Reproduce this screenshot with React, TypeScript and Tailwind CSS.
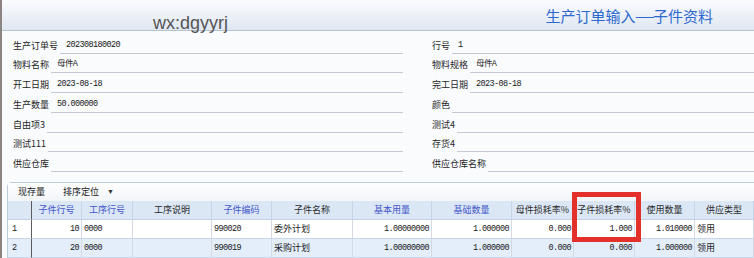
const cjk = "font-['Noto_Sans_CJK_SC','Noto_Sans',sans-serif]";
const mono = "font-['Liberation_Mono','Noto_Sans_CJK_SC',monospace]";

type Field = { label: string; value?: string };

const leftFields: Field[] = [
  { label: "生产订单号", value: "202308180020" },
  { label: "物料名称", value: "母件A" },
  { label: "开工日期", value: "2023-08-18" },
  { label: "生产数量", value: "50.000000" },
  { label: "自由项3" },
  { label: "测试111" },
  { label: "供应仓库" },
];

const rightFields: Field[] = [
  { label: "行号", value: "1" },
  { label: "物料规格", value: "母件A" },
  { label: "完工日期", value: "2023-08-18" },
  { label: "颜色" },
  { label: "测试4" },
  { label: "存货4" },
  { label: "供应仓库名称" },
];

type Col = { title: string; blue?: boolean; align: "left" | "right" };

const cols: Col[] = [
  { title: "", align: "left" },
  { title: "子件行号", blue: true, align: "right" },
  { title: "工序行号", blue: true, align: "left" },
  { title: "工序说明", align: "left" },
  { title: "子件编码", blue: true, align: "left" },
  { title: "子件名称", align: "left" },
  { title: "基本用量", blue: true, align: "right" },
  { title: "基础数量", blue: true, align: "right" },
  { title: "母件损耗率%", align: "right" },
  { title: "子件损耗率%", align: "right" },
  { title: "使用数量", align: "right" },
  { title: "供应类型", align: "left" },
];

const rows = [
  ["1", "10", "0000", "", "990020", "委外计划", "1.00000000", "1.000000", "0.000", "1.000", "1.010000", "领用"],
  ["2", "20", "0000", "", "990019", "采购计划", "1.00000000", "1.000000", "0.000", "0.000", "1.000000", "领用"],
];

function FormRow({ label, value }: Field) {
  return (
    <div className="h-[19.75px] flex items-end">
      <span className={`${cjk} text-[9px] leading-[12px] pb-[2px] pr-[2px] text-[#1e1e1e] whitespace-nowrap`}>
        {label}
      </span>
      <div className="flex-1 h-full border-b border-[#c3cad3] flex items-end pb-[3px] pl-[6px]">
        {value && (
          <span className={`${mono} text-[8.5px] leading-[10px] tracking-[-0.6px] text-[#1a1a1a] whitespace-nowrap`}>
            {value}
          </span>
        )}
      </div>
    </div>
  );
}

function App() {
  return (
    <div className="relative w-[754px] h-[258px] overflow-hidden bg-[#f9fbfd] flex">
      <div className="w-[2px] bg-[#8c8480]" />
      <div className="flex-1 flex flex-col">
        {/* title bar */}
        <div className="h-[31px] bg-gradient-to-b from-[#fbfcfe] to-[#dfe7f1] border-b border-[#b5c4d4] flex items-center justify-end pr-[41px] pt-[3px]">
          <span className={`${cjk} text-[15px] leading-[18px] text-[#2d68cf]`}>
            生产订单输入<span className="inline-block scale-x-150 mx-[2px]">—</span>子件资料
          </span>
        </div>

        {/* form */}
        <div className="flex pt-[3px] pl-[11px]">
          <div className="w-[390px] flex flex-col">
            {leftFields.map((f) => (
              <FormRow key={f.label} {...f} />
            ))}
          </div>
          <div className="flex-1 ml-[29px] flex flex-col">
            {rightFields.map((f) => (
              <FormRow key={f.label} {...f} />
            ))}
          </div>
        </div>

        {/* grid */}
        <div className="mt-[10px] ml-[5px] flex-1 border-l border-t border-[#bccad8] rounded-tl-[5px] bg-white flex flex-col">
          <div className="h-[18px] bg-gradient-to-b from-[#ffffff] to-[#f1f4f8] flex items-center">
            <span className={`${cjk} text-[9px] ml-[10px] text-[#222]`}>现存量</span>
            <span className={`${cjk} text-[9px] ml-[18px] text-[#222]`}>排序定位</span>
            <span className="text-[7px] ml-[8px] text-[#333]">▼</span>
          </div>
          <div className="grid grid-cols-[24px_50px_51px_79px_60px_81px_79px_80px_62px_61px_60px_1fr]">
            {cols.map((c, i) => (
              <div
                key={i}
                className={`h-[19px] bg-[#dce7f6] border-b border-[#c2d1e4] flex items-center justify-center ${cjk} text-[9px] whitespace-nowrap ${
                  i === 0 ? "border-r border-r-[#5b5b5b]" : "border-r border-r-[#c5d4e6]"
                } ${c.blue ? "text-[#4256c8]" : "text-[#2a2a2a]"}`}
              >
                {c.title}
              </div>
            ))}
            {rows.map((r, ri) =>
              r.map((v, ci) => {
                const col = cols[ci];
                const isNum = /^[0-9.]+$/.test(v);
                return (
                  <div
                    key={`${ri}-${ci}`}
                    className={`h-[19px] flex items-center border-b border-[#c9d7e8] whitespace-nowrap ${
                      ri === 1 ? "bg-[#e4eefa]" : "bg-white"
                    } ${ci === 0 ? "border-r border-r-[#5b5b5b] pl-[4px]" : "border-r border-r-[#d3dae3]"} ${
                      ci > 0 && col.align === "right" ? "justify-end pr-[2px]" : ci > 0 ? "pl-[2px]" : ""
                    } ${isNum ? `${mono} text-[8.5px] tracking-[-0.6px]` : `${cjk} text-[9px]`} text-[#1a1a1a]`}
                  >
                    {v}
                  </div>
                );
              })
            )}
          </div>
        </div>
      </div>

      {/* watermark */}
      <div className="absolute left-[153px] top-[14px] font-['Liberation_Sans',sans-serif] text-[18px] leading-[18px] text-[#555]">
        wx:dgyyrj
      </div>

      {/* highlight */}
      <div className="absolute left-[572px] top-[192px] w-[69px] h-[50px] border-[5px] border-[#e4302b]" />
    </div>
  );
}

export default App;
